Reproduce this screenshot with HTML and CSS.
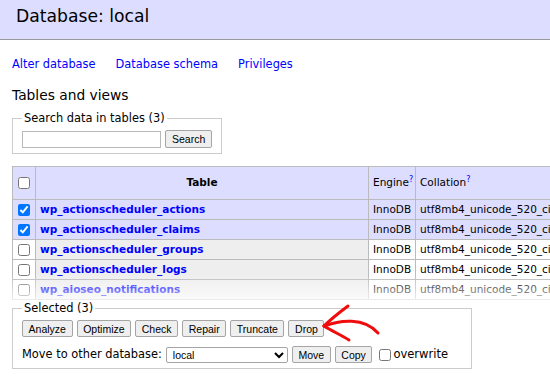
FILE: index.html
```html
<!DOCTYPE html>
<html lang="en">
<head>
	<meta charset="UTF-8">
	<title>Database: local</title>
	<link rel="stylesheet" href="styles.css">
</head>
<body>

	<header class="top">
		<h1>Database: local</h1>
	</header>

	<main class="content">
		<p class="links">
			<a href="#">Alter database</a>
			<a href="#">Database schema</a>
			<a href="#">Privileges</a>
		</p>

		<h2>Tables and views</h2>

		<fieldset class="search">
			<legend>Search data in tables (3)</legend>
			<div class="row">
				<input type="search" class="query">
				<button type="button">Search</button>
			</div>
		</fieldset>

		<div class="tables">
			<table>
				<colgroup>
					<col class="c-check">
					<col class="c-name">
					<col class="c-engine">
					<col class="c-coll">
				</colgroup>
				<thead>
					<tr>
						<td class="check"><input type="checkbox"></td>
						<th class="name">Table</th>
						<td>Engine<sup><a href="#">?</a></sup></td>
						<td>Collation<sup><a href="#">?</a></sup></td>
					</tr>
				</thead>
				<tbody>
					<tr class="checked">
						<td class="check"><input type="checkbox" checked></td>
						<th><a href="#">wp_actionscheduler_actions</a></th>
						<td>InnoDB</td>
						<td>utf8mb4_unicode_520_ci</td>
					</tr>
					<tr class="checked">
						<td class="check"><input type="checkbox" checked></td>
						<th><a href="#">wp_actionscheduler_claims</a></th>
						<td>InnoDB</td>
						<td>utf8mb4_unicode_520_ci</td>
					</tr>
					<tr>
						<td class="check"><input type="checkbox"></td>
						<th><a href="#">wp_actionscheduler_groups</a></th>
						<td>InnoDB</td>
						<td>utf8mb4_unicode_520_ci</td>
					</tr>
					<tr>
						<td class="check"><input type="checkbox"></td>
						<th><a href="#">wp_actionscheduler_logs</a></th>
						<td>InnoDB</td>
						<td>utf8mb4_unicode_520_ci</td>
					</tr>
					<tr>
						<td class="check"><input type="checkbox"></td>
						<th><a href="#">wp_aioseo_notifications</a></th>
						<td>InnoDB</td>
						<td>utf8mb4_unicode_520_ci</td>
					</tr>
				</tbody>
			</table>
		</div>

		<fieldset class="selected">
			<legend>Selected (3)</legend>
			<div class="row">
				<button type="button">Analyze</button>
				<button type="button">Optimize</button>
				<button type="button">Check</button>
				<button type="button">Repair</button>
				<button type="button">Truncate</button>
				<button type="button">Drop</button>
			</div>
			<div class="row move">
				<span>Move to other database:</span>
				<select class="target">
					<option>local</option>
				</select>
				<button type="button">Move</button>
				<button type="button">Copy</button>
				<label class="overwrite"><input type="checkbox">overwrite</label>
			</div>
		</fieldset>
	</main>

	<svg class="arrow" width="550" height="376" viewBox="0 0 550 376">
		<path d="M324 326 C340 320 364 317 378 333" />
		<path d="M324 326 C332 318 340 312 348 306" />
		<path d="M324 326 C332 331 341 335 349 340" />
	</svg>

</body>
</html>
```

FILE: styles.css
```css
html, body{
	margin: 0;
	height: 100%;
	overflow: hidden;
}

body{
	font: 11.4px/1.25 "DejaVu Sans", Verdana, sans-serif;
	color: #000;
	background: #fff;
}

a{
	color: #00f;
	text-decoration: none;
}

.top{
	height: 40px;
	box-sizing: border-box;
	padding: 6px 16px 0;
	background: #ddf;
	border-bottom: 1px solid #999;
}

.top h1{
	margin: 0;
	font-size: 17.2px;
	font-weight: normal;
	line-height: 20px;
}

.content{
	padding: 0 12px;
}

.links{
	margin: 17px 0 0;
	display: flex;
	gap: 20px;
	line-height: 15px;
}

h2{
	margin: 15px 0 0;
	font-size: 13.8px;
	font-weight: normal;
	line-height: 17px;
}

fieldset{
	margin: 0;
	border: 1px solid #ccc;
	box-sizing: border-box;
}

legend{
	padding: 0 2px;
	line-height: 15px;
}

.row{
	display: flex;
	align-items: center;
	gap: 4px;
}

button, select{
	font: 10.5px "Liberation Sans", Arial, sans-serif;
	color: #000;
}

button{
	height: 17px;
	padding: 0 5.6px;
	background: #efefef;
	border: 1px solid #a5a5a5;
	border-radius: 2px;
}

.search{
	margin-top: 7px;
	width: 210px;
	padding: 4px 9px 5px;
}

.query{
	width: 139px;
	height: 17px;
	box-sizing: border-box;
	margin: 0;
	border: 1px solid #b8b8b8;
	padding: 0 3px;
}

.search button{
	height: 18px;
	padding: 0 6px;
}

.tables{
	position: relative;
	margin-top: 12px;
	width: 538px;
	overflow: hidden;
}

.tables::after{
	content: "";
	position: absolute;
	left: 0;
	right: 0;
	bottom: 0;
	height: 26px;
	background: linear-gradient(rgba(255,255,255,0), rgba(255,255,255,0.72));
}

table{
	table-layout: fixed;
	width: 620px;
	border-spacing: 0;
	border-top: 1px solid #bbb;
	border-left: 1px solid #bbb;
	font-size: 10.5px;
}

.c-check{ width: 23px; }
.c-name{ width: 333px; }
.c-engine{ width: 47px; }

th, td{
	padding: 0 4px;
	border-right: 1px solid #bbb;
	border-bottom: 1px solid #bbb;
	text-align: left;
	white-space: nowrap;
	overflow: hidden;
	height: 20px;
	box-sizing: border-box;
}

tbody th{
	background: #eee;
}

thead td, thead th{
	background: #ddf;
	height: 33px;
}

thead th.name{
	text-align: center;
}

.checked td, .checked th{
	background: #ddf;
}

td.check{
	padding: 0;
	text-align: center;
}

input[type=checkbox]{
	width: 12px;
	height: 12px;
	margin: 0;
	vertical-align: middle;
}

sup{
	line-height: 0;
	font-size: 8px;
}

.selected{
	margin-top: 1px;
	width: 460px;
	padding: 4px 9px 5px;
}

.move{
	margin-top: 9px;
}

.target{
	width: 122px;
	height: 16px;
	margin: 0;
	padding: 0 0 0 2px;
	border: 1px solid #a5a5a5;
	border-radius: 2px;
	background: #fff;
}

.overwrite{
	display: flex;
	align-items: center;
	gap: 2px;
	margin-left: 3px;
	font-size: 11.5px;
}

.arrow{
	position: absolute;
	left: 0;
	top: 0;
	pointer-events: none;
}

.arrow path{
	fill: none;
	stroke: #f00c0c;
	stroke-width: 3;
	stroke-linecap: round;
}
```
